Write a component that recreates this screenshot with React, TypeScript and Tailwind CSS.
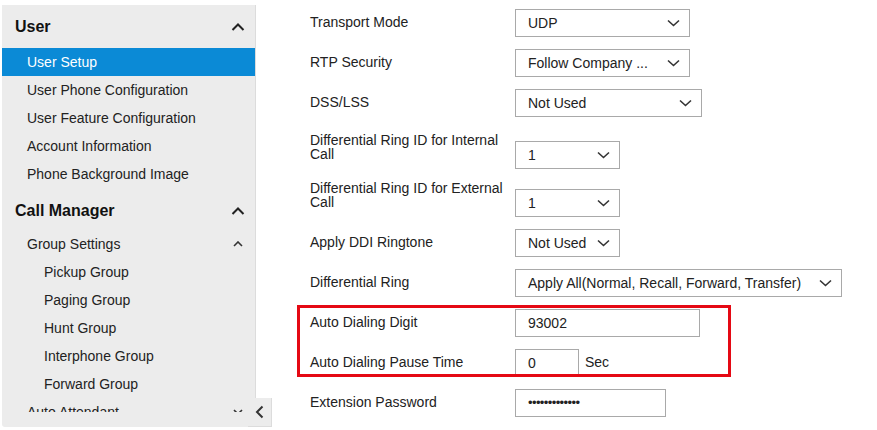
import React from "react";

const font = { fontFamily: '"Liberation Sans", Arial, sans-serif' };

function ChevUp({ small }: { small?: boolean }) {
  return small ? (
    <svg width="10" height="6" viewBox="0 0 10 6" className="block">
      <polyline points="1,5 5,1 9,5" fill="none" stroke="#333" strokeWidth="1.6" />
    </svg>
  ) : (
    <svg width="14" height="8" viewBox="0 0 14 8" className="block">
      <polyline points="1.5,7 7,1.5 12.5,7" fill="none" stroke="#222" strokeWidth="2" />
    </svg>
  );
}

function ChevDown() {
  return (
    <svg width="13" height="8" viewBox="0 0 13 8" className="block">
      <polyline points="1,1.5 6.5,6.5 12,1.5" fill="none" stroke="#333" strokeWidth="1.6" />
    </svg>
  );
}

function Select({ value, w }: { value: string; w: string }) {
  return (
    <div className={`${w} h-[28px] border border-[#a9a9a9] bg-white flex items-center justify-between pl-[12px] pr-[9px] text-[14px] text-[#222]`}>
      <span className="whitespace-nowrap">{value}</span>
      <ChevDown />
    </div>
  );
}

function Input({ value, w, small }: { value: string; w: string; small?: boolean }) {
  return (
    <div className={`${w} h-[28px] border border-[#a9a9a9] bg-white flex items-center pl-[12px] ${small ? "text-[13px] tracking-[-0.6px]" : "text-[14px]"} text-[#222]`}>
      {value}
    </div>
  );
}

function Row({ label, children, h = "h-[40px]" }: { label: string; children: React.ReactNode; h?: string }) {
  return (
    <div className={`flex items-center ${h}`}>
      <div className="w-[205px] text-[14px] text-[#222] -mt-[2px]">{label}</div>
      {children}
    </div>
  );
}

function Row2({ label, children, h }: { label: string; children: React.ReactNode; h: string }) {
  return (
    <div className={`flex items-start ${h} pt-[10px]`}>
      <div className="w-[205px] text-[14px] leading-[14px] text-[#222] pr-[8px]">{label}</div>
      <div className="mt-[8px]">{children}</div>
    </div>
  );
}

function NavItem({ label, indent = "pl-[25px]", active }: { label: string; indent?: string; active?: boolean }) {
  return (
    <div
      className={`h-[28px] flex items-center ${indent} text-[14px] ${
        active ? "bg-[#0b8ad6] text-white" : "text-[#222]"
      }`}
    >
      {label}
    </div>
  );
}

export default function App() {
  return (
    <div className="w-[877px] h-[430px] bg-white relative overflow-hidden flex" style={font}>
      {/* Sidebar */}
      <div className="ml-[2px] mt-[5px] w-[254px] h-[422px] bg-[#ececec] border-r border-[#dcdcdc] flex flex-col rounded-bl-[3px]">
        <div className="h-[407px] overflow-hidden">
          <div className="h-[43px] flex items-center justify-between pl-[13px] pr-[10px]">
            <span className="text-[16px] font-bold text-[#111]">User</span>
            <ChevUp />
          </div>
          <NavItem label="User Setup" active />
          <NavItem label="User Phone Configuration" />
          <NavItem label="User Feature Configuration" />
          <NavItem label="Account Information" />
          <NavItem label="Phone Background Image" />
          <div className="h-[42px] pt-[3px] flex items-center justify-between pl-[13px] pr-[10px]">
            <span className="text-[16px] font-bold text-[#111]">Call Manager</span>
            <ChevUp />
          </div>
          <div className="h-[28px] flex items-center justify-between pl-[25px] pr-[12px] text-[14px] text-[#222]">
            <span>Group Settings</span>
            <ChevUp small />
          </div>
          <NavItem label="Pickup Group" indent="pl-[42px]" />
          <NavItem label="Paging Group" indent="pl-[42px]" />
          <NavItem label="Hunt Group" indent="pl-[42px]" />
          <NavItem label="Interphone Group" indent="pl-[42px]" />
          <NavItem label="Forward Group" indent="pl-[42px]" />
          <div className="h-[28px] flex items-center justify-between pl-[25px] pr-[12px] text-[14px] text-[#222]">
            <span>Auto Attendant</span>
            <svg width="10" height="6" viewBox="0 0 10 6" className="block">
              <polyline points="1,1 5,5 9,1" fill="none" stroke="#333" strokeWidth="1.6" />
            </svg>
          </div>
        </div>
      </div>

      {/* collapse tab */}
      <div className="absolute left-[248px] top-[398px] w-[24px] h-[29px] bg-[#ececec] border-r border-b border-[#dcdcdc] flex items-center justify-center">
        <svg width="9" height="14" viewBox="0 0 9 14" className="block">
          <polyline points="7.5,1.5 2,7 7.5,12.5" fill="none" stroke="#333" strokeWidth="2" />
        </svg>
      </div>

      {/* Main */}
      <div className="relative pl-[54px] pt-[3px] flex flex-col">
        <Row label="Transport Mode">
          <Select value="UDP" w="w-[175px]" />
        </Row>
        <Row label="RTP Security">
          <Select value="Follow Company ..." w="w-[175px]" />
        </Row>
        <Row label="DSS/LSS">
          <Select value="Not Used" w="w-[187px]" />
        </Row>
        <Row2 label="Differential Ring ID for Internal Call" h="h-[48px]">
          <Select value="1" w="w-[105px]" />
        </Row2>
        <Row2 label="Differential Ring ID for External Call" h="h-[52px]">
          <Select value="1" w="w-[105px]" />
        </Row2>
        <Row label="Apply DDI Ringtone">
          <Select value="Not Used" w="w-[105px]" />
        </Row>
        <Row label="Differential Ring">
          <Select value="Apply All(Normal, Recall, Forward, Transfer)" w="w-[327px]" />
        </Row>
        <Row label="Auto Dialing Digit">
          <Input value="93002" w="w-[185px]" />
        </Row>
        <Row label="Auto Dialing Pause Time">
          <Input value="0" w="w-[64px]" />
          <span className="ml-[6px] text-[14px] text-[#222] -mt-[2px]">Sec</span>
        </Row>
        <Row label="Extension Password">
          <Input value="•••••••••••••" w="w-[151px]" small />
        </Row>

        {/* annotation box */}
        <div className="absolute left-[41px] top-[305px] w-[434px] h-[72px] border-[3px] border-[#e50914] pointer-events-none" />
      </div>
    </div>
  );
}
